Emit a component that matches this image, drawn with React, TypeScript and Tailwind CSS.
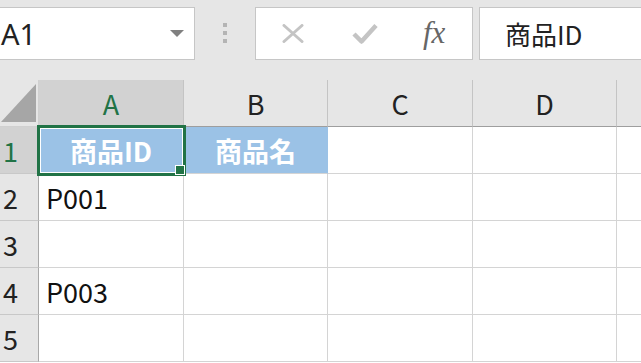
import React from 'react'

const COLS = [
  { id: 'A', w: 'w-[145px]' },
  { id: 'B', w: 'w-[144px]' },
  { id: 'C', w: 'w-[145px]' },
  { id: 'D', w: 'w-[144px]' },
  { id: 'E', w: 'w-[144px]' },
]

const ROWS: { n: number; cells: string[] }[] = [
  { n: 1, cells: ['商品ID', '商品名', '', '', ''] },
  { n: 2, cells: ['P001', '', '', '', ''] },
  { n: 3, cells: ['', '', '', '', ''] },
  { n: 4, cells: ['P003', '', '', '', ''] },
  { n: 5, cells: ['', '', '', '', ''] },
]

const jp = "font-['Noto_Sans_CJK_JP','Noto_Sans',sans-serif]"

function FormulaIcons() {
  return (
    <div className="flex items-center h-full">
      <svg width="22" height="19" viewBox="0 0 22 19" className="ml-[26px]">
        <path d="M2 1.5 L20 17.5 M20 1.5 L2 17.5" stroke="#c4c4c4" strokeWidth="3" strokeLinecap="round" fill="none" />
      </svg>
      <svg width="26" height="21" viewBox="0 0 26 21" className="ml-[48px]">
        <path d="M2 11 L9.5 18.5 L24 2.5" stroke="#c4c4c4" strokeWidth="4.5" strokeLinejoin="round" fill="none" />
      </svg>
      <span className="ml-[45px] -mt-[2px] font-['Liberation_Serif',serif] italic text-[31px] leading-none text-[#666]">
        fx
      </span>
    </div>
  )
}

export default function App() {
  return (
    <div className="w-[641px] h-[363px] overflow-hidden bg-white">
      {/* formula bar */}
      <div className="h-[80px] bg-[#e6e6e6] flex items-start pt-[7px]">
        <div className="w-[195px] h-[53px] shrink-0 bg-white border border-l-0 border-[#c6c6c6] flex items-center justify-between">
          <span className="pl-[1px] font-['Noto_Sans',sans-serif] text-[29px] leading-none text-[#222]">A1</span>
          <div className="mr-[10px] w-0 h-0 border-l-[7px] border-r-[7px] border-t-[7px] border-l-transparent border-r-transparent border-t-[#808080]" />
        </div>
        <div className="ml-[28px] mt-[16px] flex flex-col gap-[4px] shrink-0">
          <div className="w-[4px] h-[4px] bg-[#b4b4b4]" />
          <div className="w-[4px] h-[4px] bg-[#b4b4b4]" />
          <div className="w-[4px] h-[4px] bg-[#b4b4b4]" />
        </div>
        <div className="ml-[28px] w-[218px] h-[53px] shrink-0 bg-white border border-[#c6c6c6]">
          <FormulaIcons />
        </div>
        <div className="ml-[6px] flex-1 h-[53px] bg-white border border-r-0 border-[#c6c6c6] flex items-center">
          <span className={`pl-[25px] ${jp} text-[26px] leading-none text-[#222]`}>商品ID</span>
        </div>
      </div>

      {/* column headers */}
      <div className={`flex h-[47px] ${jp}`}>
        <div className="w-[39px] shrink-0 bg-[#e6e6e6] border-r border-b border-[#d0d0d0] flex items-end justify-end pr-[2px] pb-[4px]">
          <svg width="35" height="38" viewBox="0 0 35 38">
            <path d="M35 0 L35 38 L0 38 Z" fill="#a6a6a6" />
          </svg>
        </div>
        {COLS.map((c) => (
          <div
            key={c.id}
            className={`${c.w} shrink-0 border-r border-r-[#c4c4c4] border-b border-b-[#9e9e9e] flex items-center justify-center text-[27px] leading-none ${
              c.id === 'A' ? 'bg-[#d2d2d2] text-[#217346]' : 'bg-[#e6e6e6] text-[#222]'
            }`}
          >
            {c.id === 'E' ? '' : c.id}
          </div>
        ))}
      </div>

      {/* rows */}
      {ROWS.map((r) => (
        <div key={r.n} className={`flex h-[47px] ${jp}`}>
          <div
            className={`w-[39px] shrink-0 border-r border-r-[#a8a8a8] border-b border-b-[#c8c8c8] flex items-center pl-[3px] text-[27px] leading-none ${
              r.n === 1 ? 'bg-[#d2d2d2] text-[#217346]' : 'bg-[#e6e6e6] text-[#222]'
            }`}
          >
            {r.n}
          </div>
          {COLS.map((c, i) => {
            const filled = r.n === 1 && i < 2
            return (
              <div
                key={c.id}
                className={`${c.w} shrink-0 relative border-b border-b-[#d4d4d4] border-r flex items-center ${
                  filled
                    ? 'bg-[#9bc2e6] border-r-[#9bc2e6] justify-center font-bold text-white text-[27px]'
                    : 'bg-white border-r-[#d4d4d4] pl-[7px] text-[27px] text-[#111]'
                } leading-none`}
              >
                {r.cells[i]}
                {r.n === 1 && i === 0 && (
                  <div className="absolute z-10 left-[-2px] top-[-2px] w-[149px] h-[51px] border-3 border-solid border-[#217346]">
                    <div className="w-full h-full border border-white" />
                    <div className="absolute left-[135px] top-[37px] w-[10px] h-[10px] bg-[#217346] border border-white" />
                  </div>
                )}
              </div>
            )
          })}
        </div>
      ))}
    </div>
  )
}
